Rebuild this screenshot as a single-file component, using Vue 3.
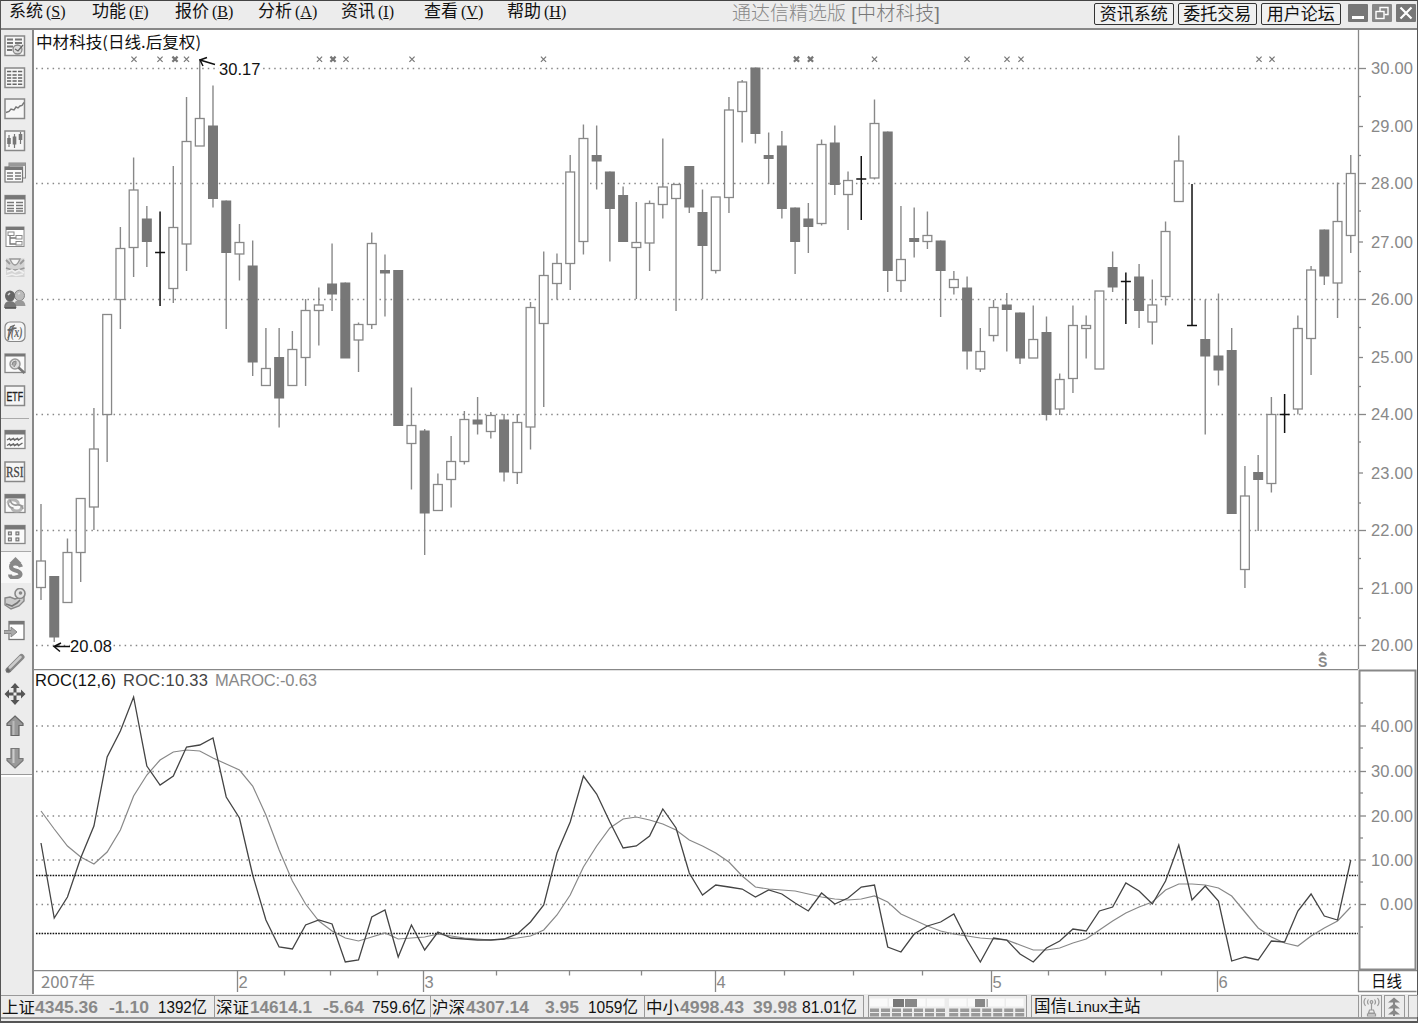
<script setup>
import { ref, computed } from "vue";

const menus = [
  { name: "系统", key: "S" },
  { name: "功能", key: "F" },
  { name: "报价", key: "B" },
  { name: "分析", key: "A" },
  { name: "资讯", key: "I" },
  { name: "查看", key: "V" },
  { name: "帮助", key: "H" },
];

const links = ["资讯系统", "委托交易", "用户论坛"];

// page with a dark title strip, shared by several toolbar icons
const page = `<rect x="1" y="1.5" width="20" height="18" fill="#fafafa" stroke="#888" stroke-width="1.3"/><rect x="1" y="1.5" width="20" height="4" fill="#777"/>`;
const sheet = `<rect x="1" y="1" width="19.5" height="19.5" fill="#f6f6f6" stroke="#888" stroke-width="1.5"/>`;

const quoteTools = [
  `${sheet}<path d="M3 4.5h6M3 8h6M3 11.5h6M3 15h5M11 4.5h7M11 8h7" stroke="#777" stroke-width="1.8"/><circle cx="13.5" cy="14.5" r="4.5" fill="#ddd" stroke="#888" stroke-width="1.3"/><path d="M11 14l3 2 5-6" fill="none" stroke="#666" stroke-width="1.3"/>`,
  `${sheet}<path d="M3 4.5h16M3 8h16M3 11h16M3 14h16M3 17.3h16" stroke="#666" stroke-width="1.6" stroke-dasharray="4.2 1.3"/>`,
  `${sheet}<path d="M2 14.5l3-1 2-2.500 3 1 2-3 2 1 2-2 2-.500 2-3" fill="none" stroke="#777" stroke-width="1.4"/>`,
  `${sheet}<path d="M5 5v12M10.5 4v14M16.5 2v12" stroke="#777" stroke-width="1.2"/><path d="M5 8v6M10.500 6.500v8M16.500 4v6" stroke="#777" stroke-width="3.600"/>`,
  `<rect x="5" y="1" width="16.500" height="15" fill="#eee" stroke="#888"/><rect x="5" y="1" width="16.500" height="3" fill="#999"/><rect x="1" y="5" width="17.500" height="15" fill="#fafafa" stroke="#777" stroke-width="1.2"/><rect x="1" y="5" width="17.500" height="3" fill="#777"/><path d="M3 11h6M3 14h6M3 17h6M11 11h6M11 14h6M11 17h6" stroke="#777" stroke-width="1.300"/>`,
  `${page}<path d="M3 8.500h7M3 11.500h7M3 14.500h7M3 17h7M12 8.500h7M12 11.500h7M12 14.500h7M12 17h7" stroke="#777" stroke-width="1.600"/>`,
  `<rect x="2" y="1" width="18" height="19.500" fill="#fff" stroke="#888"/><rect x="2" y="1" width="18" height="3" fill="#777"/><path d="M6 9v9h6M6 12h6" fill="none" stroke="#777" stroke-width="1.300"/><rect x="4" y="6" width="6" height="3.500" fill="#fff" stroke="#888"/><rect x="12" y="9.500" width="6" height="3.500" fill="#fff" stroke="#888"/><rect x="12" y="15.500" width="6" height="3.500" fill="#fff" stroke="#888"/>`,
  `<rect x="2" y="1.500" width="18.500" height="18.500" fill="#d4d4d4"/><path d="M2 3l4 4M20 3l-4 4" stroke="#999" stroke-width="1.800"/><path d="M6 2q5 12 10 0z" fill="#f4f4f4" stroke="#999" stroke-width="1.300"/><path d="M2 11q9 4 18.500 0" fill="none" stroke="#999" stroke-width="1.500"/><path d="M3 15l5-2 3 2 4-2 5 3M2 19l6-2 4 1.500 7-1.500" fill="none" stroke="#f0f0f0" stroke-width="1.600"/>`,
  `<ellipse cx="15.500" cy="6.500" rx="5" ry="5.300" fill="#bbb" stroke="#888"/><path d="M10 17q0-6 5.500-6t6 6z" fill="#999"/><ellipse cx="6" cy="7" rx="5" ry="5.500" fill="#666"/><path d="M0 19q0-7 6-7t6.500 7z" fill="#777"/><path d="M4 6l2-2M14 5l2-1" stroke="#ddd" stroke-width="1.500"/><path d="M1 19h11" stroke="#555" stroke-width="1.600"/>`,
  `<rect x="1" y="1" width="20" height="19.500" rx="5" fill="#f6f6f6" stroke="#888" stroke-width="1.200"/><text x="3.500" y="16" font-size="14" font-family="Liberation Serif" font-style="italic" font-weight="700" fill="#666" textLength="15" lengthAdjust="spacingAndGlyphs">f(x)</text><path d="M4 17l5.500-12M3.500 9l9-2M6 6l5-2" stroke="#666" stroke-width="1.300"/>`,
  `<rect x="1" y="1" width="20" height="18.500" fill="#fafafa" stroke="#888" stroke-width="1.300"/><rect x="1" y="1" width="20" height="2.500" fill="#777"/><circle cx="11" cy="11" r="5" fill="#ddd" stroke="#999" stroke-width="1.500"/><path d="M14.500 14.500l6 5.500" stroke="#777" stroke-width="2.500"/><path d="M8 12l1-3 3-1v3l-2 3" fill="#aaa" stroke="#888"/>`,
  `${sheet}<text x="2.500" y="15.500" font-size="13" font-family="Liberation Sans" fill="#222" stroke="#222" stroke-width="0.300" textLength="16.500" lengthAdjust="spacingAndGlyphs">ETF</text>`,
];

const chartTools = [
  { art: `${page}<path d="M3 11l2.500-1.500 1 1.500 3-1.500 1 1.500 3-1.500 1 1.500 4-2.500M3 16.500l2.500-1.500 1 1.500 3-1.500 1 1.500 3-1.500 1 1.500 4-2.500" fill="none" stroke="#666" stroke-width="1.400"/>` },
  { art: `${sheet}<text x="2" y="15.500" font-size="14" font-family="Liberation Serif" fill="#444" stroke="#444" stroke-width="0.300" textLength="17.500" lengthAdjust="spacingAndGlyphs">RSI</text>` },
  { art: `${page}<path d="M4 10q1-4 6-3t4 5M18 12q0 6-5 6t-5-4" fill="none" stroke="#b4b4b4" stroke-width="3"/><path d="M6 7q2 6 7 5t6 4M4 10q1 5 5 5" fill="none" stroke="#999" stroke-width="1.600"/>` },
  { art: `${page}<g fill="#ddd" stroke="#777" stroke-width="1.200"><rect x="4.500" y="8" width="2.800" height="2.800"/><rect x="12" y="8" width="2.800" height="2.800"/><rect x="4.500" y="14" width="2.800" height="2.800"/><rect x="12" y="14" width="2.800" height="2.800"/></g>` },
  { art: `<path d="M11.500 0l6 6h-12z" fill="#888"/><path d="M17 10q-1-3.500-5.500-3.500T7 9.500t4.500 4 5 3.500-5 3.500T6 17.500" fill="none" stroke="#888" stroke-width="4"/>`, pressed: true },
  { art: `<path d="M1 10l5-1 5 2 9-3v5l-5 5-8 3-6-4z" fill="#ccc" stroke="#888" stroke-width="1.400"/><circle cx="16" cy="5.500" r="5" fill="#e4e4e4" stroke="#888" stroke-width="1.600"/><circle cx="16.500" cy="5" r="1.800" fill="#888"/><path d="M2 16l6 2 5-3 3-3" fill="none" stroke="#777" stroke-width="1.600"/>` },
  { art: `<rect x="5" y="1.500" width="15" height="18" fill="#fff" stroke="#777" stroke-width="1.300"/><rect x="5" y="1.500" width="15" height="3" fill="#777"/><path d="M0 10.500h7V7l6 5-6 5v-3.500H0z" fill="#aaa" stroke="#888"/>` },
  { art: `<path d="M4.500 18L17.500 5" stroke="#888" stroke-width="6" stroke-linecap="round"/><path d="M6 15.500L16.500 5" stroke="#ccc" stroke-width="2.500" stroke-linecap="round"/><path d="M2 20.500l1-5 4 4z" fill="#666"/>` },
  { art: `<path d="M11 0l4.500 5h-3v4.500h4.500v-3l4.500 4.500-4.500 4.500v-3h-4.500v4.500h3L11 22l-4.500-5h3v-4.500H5v3L.5 11 5 6.500v3h4.500V5h-3z" fill="#555"/><rect x="9.500" y="9.500" width="3" height="3" fill="#eee"/>` },
  { art: `<path d="M11 1l8 7.500v2h-4V20.500H7v-10H3v-2z" fill="#999" stroke="#666" stroke-width="1.200"/><path d="M9.500 6v14" stroke="#bbb" stroke-width="2"/>` },
  { art: `<path d="M11 21l8-7.500v-2h-4V1.500H7v10H3v2z" fill="#999" stroke="#777" stroke-width="1.200"/><path d="M9.500 2v14" stroke="#ccc" stroke-width="2"/>` },
];

// [high, body top, body bottom, low, kind]  u = up (hollow), d = down (solid), f = flat
const rawCandles = [
  [504, 561, 587.5, 600, "u"], [576, 576, 637.5, 642, "d"], [538.5, 552.5, 602.5, 602, "u"], [498.5, 498.5, 552.5, 582, "u"],
  [408, 449, 507, 530, "u"], [314.5, 314.5, 414.5, 462, "u"], [227, 248.5, 299.5, 329, "u"], [157.5, 190, 247.5, 277, "u"],
  [206, 218.5, 242, 267, "d"], [211.5, 252.5, 252.5, 306, "f"], [166, 227.5, 288.5, 303, "u"], [97, 141.5, 244, 271, "u"],
  [59, 118.5, 146, 146, "u"], [85.5, 125.5, 199, 207.5, "d"], [200.5, 200.5, 253, 329, "d"], [224, 242.5, 254, 280.5, "u"],
  [240.5, 265.5, 362.5, 376, "d"], [328, 368.5, 385.5, 385.5, "u"], [328, 357, 398.5, 427.5, "d"], [331, 349.5, 385.5, 385.5, "u"],
  [299, 310.5, 357.5, 386, "u"], [287.5, 305, 310.5, 345.5, "u"], [243.5, 283.5, 294.5, 311, "d"], [282.5, 282.5, 358.5, 358, "d"],
  [322.5, 324.5, 340, 372, "u"], [232.5, 243.5, 324.5, 329, "u"], [254.5, 270, 273.5, 316.5, "d"], [270, 270, 426, 426, "d"],
  [387.5, 425.5, 443.5, 489.5, "u"], [429, 430.5, 513.5, 555, "d"], [473.5, 484.5, 510.5, 510, "u"], [436, 461.5, 479.5, 507.5, "u"],
  [411, 419.5, 461.5, 464.5, "u"], [397, 419.5, 424.5, 434.5, "d"], [412, 415.5, 431.5, 438.5, "u"], [414, 419.5, 472.5, 481.5, "d"],
  [414, 422.5, 472.5, 484, "u"], [302, 307.5, 427, 449.5, "u"], [251.5, 275.5, 323.5, 407, "u"], [253.5, 263.5, 283.5, 299.5, "u"],
  [155, 172, 263.5, 290, "u"], [124.5, 138.5, 241.5, 254.5, "u"], [125.5, 155, 161.5, 189.5, "d"], [171.5, 171.5, 209, 261.5, "d"],
  [186.5, 195, 242, 242, "d"], [202, 242.5, 247.5, 299, "u"], [200.5, 203.5, 243, 271, "u"], [138.5, 187, 204.5, 218.5, "u"],
  [184, 184.5, 198.5, 311, "u"], [166, 166, 207.5, 213, "d"], [189.5, 212, 246, 299, "d"], [197, 197, 270.5, 273.5, "u"],
  [97, 110, 197.5, 213, "u"], [80, 82, 111.5, 142.5, "u"], [67.5, 67.5, 134, 143.5, "d"], [132.5, 155, 159, 184, "d"],
  [131, 145.5, 209, 218.5, "d"], [207.5, 207.5, 242, 274, "d"], [203, 218.5, 227, 253, "d"], [139.5, 144.5, 223.5, 225.5, "u"],
  [125.5, 142.5, 185, 195, "d"], [171.5, 180.5, 194.5, 230, "u"], [156, 179, 179, 220, "f"], [99.5, 123.5, 178, 179.5, "u"],
  [131.5, 131.5, 271, 292, "d"], [206, 259.5, 280.5, 292, "u"], [207.5, 238, 242, 257.5, "d"], [211.5, 235.5, 241.5, 249, "u"],
  [240.5, 240.5, 271, 317, "d"], [271, 279.5, 287.5, 294.5, "u"], [276.5, 287.5, 351.5, 369.5, "d"], [328, 351.5, 369, 372, "u"],
  [300, 307.5, 335.5, 341.5, "u"], [293, 304.5, 310, 351.5, "d"], [312.5, 312.5, 358.5, 364, "d"], [305.5, 339.5, 358, 358, "u"],
  [316.5, 332, 415, 420.5, "d"], [373.5, 379.5, 409, 415, "u"], [305.5, 325.5, 378.5, 393, "u"], [315.5, 325.5, 328.5, 358.5, "u"],
  [291, 291, 369, 369, "u"], [251.5, 267, 287.5, 292, "d"], [272.5, 281.5, 281.5, 324, "f"], [264, 276.5, 311, 328, "d"],
  [279.5, 305, 322, 344.5, "u"], [221.5, 231.5, 296.5, 305.5, "u"], [135.5, 161, 201.5, 201, "u"], [184, 325.5, 325.5, 325.5, "f"],
  [299.5, 339, 356.5, 434.5, "d"], [293.5, 355.5, 370.5, 385.5, "d"], [328, 350, 514, 514, "d"], [466, 496, 569.5, 588, "u"],
  [455, 472, 480, 531, "d"], [397, 414.5, 483.5, 492.5, "u"], [394, 414.5, 414.5, 433, "f"], [315.5, 328.5, 409, 414.5, "u"],
  [266, 270, 338.5, 375, "u"], [229.5, 229.5, 276.5, 285, "d"], [182.5, 221.5, 283, 318, "u"], [155, 173.5, 235.5, 253, "u"],
];

const xAt = (i) => 41 + i * 13.23;

const candles = ref(
  rawCandles.map(([high, top, bottom, low, kind], i) => ({
    x: xAt(i),
    high,
    top,
    bottom,
    low,
    kind,
  }))
);

const roc = [
  843, 918, 897, 858, 826, 757, 731, 697, 766, 785, 776, 747, 745, 738, 797, 818, 875, 920, 947, 949,
  925, 920, 924, 962, 960, 917, 910, 957, 925, 950, 932, 938, 939, 940, 940, 939, 934, 922, 905, 853,
  822, 776, 794, 822, 848, 846, 836, 809, 828, 873, 895, 885, 887, 889, 897, 890, 894, 903, 911, 893,
  904, 898, 887, 885, 947, 952, 934, 926, 922, 914, 940, 962, 938, 940, 954, 962, 948, 941, 929, 931,
  911, 907, 883, 891, 904, 881, 845, 900, 886, 901, 961, 957, 960, 941, 942, 911, 894, 916, 920, 860,
];

const maroc = [
  811, 829, 846, 857, 864, 852, 830, 796, 775, 760, 752, 750, 751, 758, 764, 770, 786, 815, 850, 881,
  904, 921, 931, 938, 941, 937, 933, 939, 938, 937, 934, 936, 938, 939, 940, 939, 938, 936, 930, 915,
  895, 867, 846, 828, 819, 817, 820, 824, 830, 840, 846, 853, 862, 876, 887, 889, 890, 891, 894, 897,
  899, 900, 899, 896, 902, 914, 920, 926, 931, 934, 936, 938, 939, 940, 945, 950, 950, 948, 943, 939,
  930, 921, 913, 907, 902, 890, 884, 884, 885, 888, 896, 912, 928, 937, 943, 946, 936, 928, 921, 907,
];

const toPoints = (values) => values.map((y, i) => `${xAt(i)},${y}`).join(" ");
const rocPoints = computed(() => toPoints(roc));
const marocPoints = computed(() => toPoints(maroc));

const priceGrid = [68.5, 183.5, 299.5, 414.5, 530.5, 645.5];
const priceLabels = [68.5, 126.5, 183.5, 242, 299.5, 357.5, 414.5, 473, 530.5, 588.5, 645.5].map((y, i) => ({
  y,
  text: (30 - i).toFixed(2),
  long: i % 2 === 0,
}));
const priceHalves = [96.5, 155.5, 211, 271.5, 327.5, 386.5, 442, 503, 558.5, 618];

const rocLabels = [726, 771.5, 816, 860, 904.5].map((y, i) => ({
  y,
  text: (40 - i * 10).toFixed(2),
}));
const rocHalves = [703, 748, 793, 838, 882, 927];

const marks = [
  [134], [160], [175, true], [186.5], [319.5], [333, true], [346], [412], [543.5], [796.5, true],
  [810.5, true], [874.5], [967], [1007], [1021], [1259], [1272],
];

const months = [
  { x: 237.5, text: "2" },
  { x: 423.5, text: "3" },
  { x: 715.5, text: "4" },
  { x: 991.5, text: "5" },
  { x: 1217.5, text: "6" },
];
const weeks = [284.5, 330.5, 377.5, 496.5, 569.5, 641.5, 784.5, 853.5, 922.5, 1048.5, 1105.5, 1161.5];

// [text, x offset, width, class] for the fields inside each index cell
const indexes = [
  { name: "上证", width: 214, parts: [["4345.36", 34, 63, "num"], ["-1.10", 108, 40, "num"], ["1392亿", 157, 49, "amt"]] },
  { name: "深证", width: 216, parts: [["14614.1", 35, 62, "num"], ["-5.64", 108, 41, "num"], ["759.6亿", 157, 54, "amt"]] },
  { name: "沪深", width: 214, parts: [["4307.14", 35, 63, "num"], ["3.95", 114, 34, "num"], ["1059亿", 157, 50, "amt"]] },
  { name: "中小", width: 219, parts: [["4998.43", 35, 64, "num"], ["39.98", 108, 44, "num"], ["81.01亿", 157, 55, "amt"]] },
];

const meterCells = [0, 1, 2, 3, 4, 5, 6, 7.2, 8.2, 9.2, 10.2, 11.2, 12.2, 13.2];
</script>

<template>
  <div class="terminal">
    <header class="menubar">
      <nav class="menus">
        <span v-for="menu in menus" :key="menu.key" class="menu"
          >{{ menu.name }}<span class="hotkey">(<u>{{ menu.key }}</u>)</span></span
        >
      </nav>
      <h1 class="title">通达信精选版 <span class="stock">[中材科技]</span></h1>
      <div class="links">
        <button v-for="link in links" :key="link" class="link">{{ link }}</button>
      </div>
      <div class="window-btns">
        <svg class="win" viewBox="0 0 20 18"><rect width="20" height="18" rx="1" fill="#777" /><path d="M4 13.500h12" stroke="#fff" stroke-width="3" /></svg>
        <svg class="win" viewBox="0 0 20 18"><rect width="20" height="18" rx="1" fill="#888" /><path d="M8 7V3.500h8v7h-3.500" fill="none" stroke="#fff" stroke-width="1.400" /><rect x="4" y="7.500" width="8" height="7" fill="none" stroke="#fff" stroke-width="1.400" /></svg>
        <svg class="win" viewBox="0 0 20 18"><rect width="20" height="18" rx="1" fill="#777" /><path d="M4.500 3.500l11 11M15.500 3.500l-11 11" stroke="#fff" stroke-width="2.200" /></svg>
      </div>
    </header>

    <main class="body">
      <aside class="toolbar">
        <div v-for="(art, i) in quoteTools" :key="i" class="tool">
          <svg class="tool-icon" viewBox="0 0 22 22" v-html="art"></svg>
        </div>
        <div class="tool-sep"></div>
        <div v-for="(tool, i) in chartTools" :key="'c' + i" :class="['tool', { pressed: tool.pressed }]">
          <svg class="tool-icon" viewBox="0 0 22 22" v-html="tool.art"></svg>
        </div>
        <div class="tool-end"></div>
      </aside>

      <section class="charts">
        <svg class="price-chart" viewBox="34 30 1383 639">
          <line v-for="y in priceGrid" :key="y" x1="36" x2="1358" :y1="y" :y2="y" class="grid" />

          <g v-for="(c, i) in candles" :key="i">
            <line :x1="c.x" :x2="c.x" :y1="c.high" :y2="c.low" :class="c.kind === 'f' ? 'flat' : 'wick'" />
            <line v-if="c.kind === 'f'" :x1="c.x - 5" :x2="c.x + 5" :y1="c.top" :y2="c.top" class="flat" />
            <rect
              v-else-if="c.kind === 'u'"
              :x="c.x - 4.4"
              :y="c.top"
              width="8.8"
              :height="c.bottom - c.top"
              class="up"
            />
            <rect v-else :x="c.x - 5" :y="c.top" width="10" :height="c.bottom - c.top" class="down" />
          </g>

          <path
            v-for="[x, bold] in marks"
            :key="x"
            :d="`M${x - 2.6} 56.600l5.200 5.200M${x + 2.6} 56.600l-5.200 5.200`"
            :class="['mark', { bold }]"
          />

          <text x="36" y="48" class="cjk heading" textLength="165" lengthAdjust="spacingAndGlyphs">中材科技(日线.后复权)</text>

          <path d="M215 64.500L200 60M207 57.500l-7 2.500 3 6" class="arrow" />
          <rect x="219" y="66" width="42" height="5" fill="#fff" />
          <text x="219" y="74.500" class="num dark" textLength="41.500">30.17</text>
          <path d="M70 646.500H54M61 643l-7 3.500 6 5" class="arrow" />
          <rect x="70" y="643" width="42" height="5" fill="#fff" />
          <text x="70" y="651.500" class="num dark" textLength="42">20.08</text>

          <path d="M1318 655.500l4.500-4 4.500 4z" fill="#888" />
          <text x="1318" y="667" class="signal">S</text>

          <line x1="1358.500" x2="1358.500" y1="30" y2="669" class="axis" />
          <g v-for="label in priceLabels" :key="label.text">
            <line x1="1358" :x2="label.long ? 1366 : 1363" :y1="label.y" :y2="label.y" class="axis" />
            <text x="1371" :y="label.y + 5.8" class="num" textLength="42">{{ label.text }}</text>
          </g>
          <line v-for="y in priceHalves" :key="y" x1="1358" x2="1361" :y1="y" :y2="y" class="axis" />
        </svg>

        <svg class="roc-chart" viewBox="34 669 1383 301">
          <line x1="34" x2="1358" y1="669.500" y2="669.500" class="axis" />
          <line v-for="label in rocLabels" :key="label.y" x1="36" x2="1358" :y1="label.y" :y2="label.y" class="grid" />
          <line v-for="y in [875.5, 933.5]" :key="y" x1="36" x2="1358" :y1="y" :y2="y" class="threshold" />

          <polyline :points="marocPoints" class="maroc" />
          <polyline :points="rocPoints" class="roc" />

          <text x="35" y="686" class="num dark" textLength="81">ROC(12,6)</text>
          <text x="123" y="686" class="num mid" textLength="85">ROC:10.33</text>
          <text x="215" y="686" class="num" textLength="102">MAROC:-0.63</text>

          <rect x="1359.500" y="670.500" width="56" height="299" class="axis-box" />
          <g v-for="label in rocLabels" :key="label.text">
            <line x1="1359" x2="1366" :y1="label.y" :y2="label.y" class="axis" />
            <text
              :x="label.text.length < 5 ? 1380 : 1371"
              :y="label.y + 5.8"
              class="num"
              :textLength="label.text.length < 5 ? 33 : 42"
            >
              {{ label.text }}
            </text>
          </g>
          <line v-for="y in rocHalves" :key="'h' + y" x1="1359" x2="1363" :y1="y" :y2="y" class="axis" />
        </svg>

        <svg class="time-axis" viewBox="34 970 1383 24">
          <line x1="34" x2="1417" y1="970.500" y2="970.500" class="axis" />
          <text x="41" y="988" class="num cjk" textLength="54" lengthAdjust="spacingAndGlyphs">2007年</text>
          <line v-for="x in weeks" :key="x" :x1="x" :x2="x" y1="970" y2="975.500" class="axis" />
          <g v-for="month in months" :key="month.x">
            <line :x1="month.x" :x2="month.x" y1="970" y2="992" class="axis" />
            <text :x="month.x + 1" y="988" class="num">{{ month.text }}</text>
          </g>
          <path d="M1358.500 970v21.500h58" class="axis" fill="none" />
          <text x="1371" y="986.500" class="cjk heading" textLength="31" lengthAdjust="spacingAndGlyphs">日线</text>
        </svg>
      </section>
    </main>

    <footer class="statusbar">
      <div v-for="index in indexes" :key="index.name" class="cell" :style="{ width: index.width + 'px' }">
        <svg class="cell-text" :width="index.width - 2" height="22">
          <text x="1" y="17" class="heading" textLength="33" lengthAdjust="spacingAndGlyphs">{{ index.name }}</text>
          <text
            v-for="[text, x, width, kind] in index.parts"
            :key="x"
            :x="x"
            y="17"
            :class="kind"
            :textLength="width"
            lengthAdjust="spacingAndGlyphs"
          >
            {{ text }}
          </text>
        </svg>
      </div>
      <div class="cell meter">
        <svg width="156" height="22">
          <path d="M1 6.500h75M80 6.500h75" stroke="#fafafa" stroke-width="8" stroke-dasharray="17.500 1.500" />
          <rect x="24" y="3" width="11" height="8" fill="#777" />
          <rect x="36" y="3" width="12" height="8" fill="#888" />
          <rect x="106" y="3" width="10" height="8" fill="#888" />
          <rect x="117.500" y="3" width="1.500" height="8" fill="#aaa" />
          <g v-for="n in meterCells" :key="n" fill="#999">
            <rect :x="1 + n * 11" y="12.500" width="9" height="3.500" />
            <rect :x="1 + n * 11" y="17" width="9" height="3.500" />
          </g>
        </svg>
      </div>
      <div class="cell host">国信<span class="latin">Linux</span>主站</div>
      <div class="cell small">
        <svg width="19" height="21" fill="none" stroke="#999" stroke-width="1.200">
          <path d="M9.500 7v7M3.500 2q-3 4 0 8M15.500 2q3 4 0 8M6.500 3.500q-2 2.500 0 5M12.500 3.500q2 2.500 0 5M7.500 14h4l1 3h-6zM5.500 18h8v2h-8z" />
          <circle cx="9.500" cy="6" r="1.300" />
        </svg>
      </div>
      <div class="cell small">
        <svg width="18" height="21" fill="#888">
          <path d="M9 1.500l6 5H3zM9 7.500l6 5H3zM9 13.500l6 5H3zM8 5h2v15H8z" />
        </svg>
      </div>
      <div class="cell rest"></div>
    </footer>
  </div>
</template>

<style>
body {
  margin: 0;
  background: #ececec;
}
</style>

<style scoped>
.terminal {
  width: 1418px;
  height: 1023px;
  box-sizing: border-box;
  display: flex;
  flex-direction: column;
  background: #ececec;
  border-top: 1px solid #444;
  border-left: 1px solid #555;
  border-right: 1px solid #555;
  border-bottom: 2px solid #555;
  font-family: "Liberation Sans", "Noto Sans CJK SC", sans-serif;
  color: #111;
}

svg {
  display: block;
}

.menubar {
  height: 29px;
  flex: none;
  box-sizing: border-box;
  display: flex;
  align-items: flex-start;
  border-bottom: 2px solid #888;
}

.menus {
  display: flex;
  width: 731px;
  padding-left: 8px;
  box-sizing: border-box;
}

.menu {
  width: 83px;
  font-size: 17px;
  line-height: 21px;
  white-space: nowrap;
}

.hotkey {
  font-family: "Liberation Serif", serif;
  font-size: 16px;
  margin-left: 3px;
}

.title {
  width: 362px;
  margin: 0;
  font-size: 19px;
  line-height: 25px;
  font-weight: 300;
  color: #888;
  white-space: nowrap;
}

.stock {
  color: #777;
  letter-spacing: 0.400px;
}

.links {
  display: flex;
  gap: 4px;
  padding-top: 2px;
}

.link {
  width: 79.500px;
  height: 22px;
  padding: 0;
  background: #f0f0f0;
  border: 1.500px solid #333;
  border-radius: 2px;
  font-family: "Liberation Sans", "Noto Sans CJK SC", sans-serif;
  font-size: 17px;
  line-height: 19px;
  color: #111;
}

.window-btns {
  display: flex;
  gap: 4px;
  padding: 3px 0 0 7px;
}

.win {
  width: 20px;
  height: 18px;
}

.body {
  display: flex;
  height: 964px;
  flex: none;
}

.toolbar {
  width: 33px;
  flex: none;
  box-sizing: border-box;
  border-right: 2px solid #888;
  background: #ececec;
}

.tool {
  height: 31.800px;
  width: 30px;
  display: flex;
  align-items: center;
  padding-left: 3px;
  box-sizing: border-box;
}

.tool.pressed {
  background: #f8f8f8;
  border-top: 1px solid #aaa;
}

.tool-icon {
  width: 22px;
  height: 22px;
}

.tool-sep {
  height: 12.600px;
  background: linear-gradient(#aaa, #aaa) 0 6px / 28px 1px no-repeat;
}

.tool-end {
  height: 2px;
  border-top: 1px solid #999;
  background: #fff;
}

.charts {
  width: 1383px;
  background: #fff;
}

.price-chart {
  width: 1383px;
  height: 639px;
}

.roc-chart {
  width: 1383px;
  height: 301px;
}

.time-axis {
  width: 1383px;
  height: 24px;
}

.grid {
  stroke: #888;
  stroke-width: 1.300;
  stroke-dasharray: 1.500 4.040;
}

.threshold {
  stroke: #111;
  stroke-width: 1.500;
  stroke-dasharray: 1.600 1.170;
}

.axis {
  stroke: #888;
  stroke-width: 1.300;
}

.axis-box {
  fill: none;
  stroke: #888;
  stroke-width: 2;
}

.wick {
  stroke: #888;
  stroke-width: 1.400;
}

.flat {
  stroke: #111;
  stroke-width: 1.500;
}

.up {
  fill: #fff;
  stroke: #888;
  stroke-width: 1.300;
}

.down {
  fill: #777;
}

.mark {
  stroke: #777;
  stroke-width: 1.200;
}

.mark.bold {
  stroke-width: 2.200;
}

.arrow {
  fill: none;
  stroke: #111;
  stroke-width: 1.500;
}

.roc {
  fill: none;
  stroke: #444;
  stroke-width: 1.300;
}

.maroc {
  fill: none;
  stroke: #888;
  stroke-width: 1.200;
}

.num {
  font-size: 16.500px;
  fill: #888;
}

.num.dark {
  fill: #111;
}

.num.mid {
  fill: #444;
}

.cjk {
  font-family: "Noto Sans CJK SC", sans-serif;
}

.heading {
  font-size: 16px;
  fill: #111;
}

.signal {
  font-size: 14px;
  font-weight: 700;
  fill: #888;
}

.statusbar {
  height: 25px;
  flex: none;
  display: flex;
  align-items: center;
  border-bottom: 2px solid #999;
  box-sizing: border-box;
}

.cell {
  height: 22px;
  flex: none;
  box-sizing: border-box;
  border-top: 1px solid #999;
  border-right: 1px solid #999;
}

.cell-text .num {
  font-weight: 700;
  font-size: 16px;
}

.amt {
  font-size: 16.500px;
  fill: #111;
}

.meter {
  width: 159px;
  margin-left: 4px;
  border-left: 1px solid #999;
}

.host {
  width: 328px;
  margin-left: 4px;
  border-left: 1px solid #999;
  padding-left: 2px;
  font-size: 16.500px;
  line-height: 21px;
}

.latin {
  font-family: "Liberation Mono", monospace;
  font-size: 15px;
  letter-spacing: -0.900px;
}

.small {
  width: 21px;
  margin-left: 2px;
  border-left: 1px solid #999;
}

.rest {
  width: 10px;
  margin-left: 3px;
  border-left: 1px solid #999;
}
</style>
